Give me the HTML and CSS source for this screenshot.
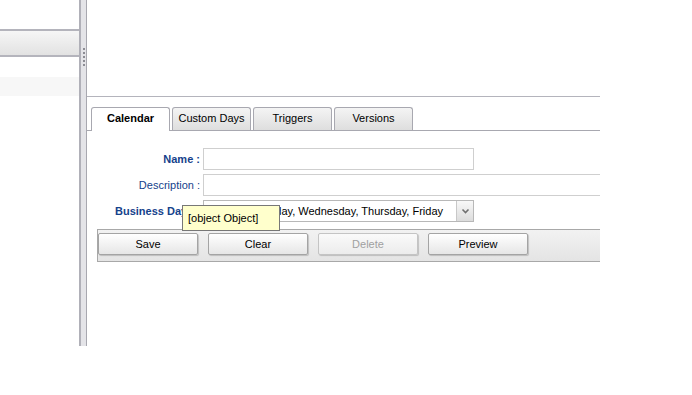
FILE: index.html
```html
<!DOCTYPE html>
<html lang="en">

<head>
    <meta charset="UTF-8">
    <title>Calendar</title>
    <link rel="stylesheet" href="styles.css">
</head>

<body>

    <div class="layout">
        <div class="west">
            <div class="west-top"></div>
            <div class="west-header"></div>
            <div class="west-gap"></div>
            <div class="west-row"></div>
        </div>

        <div class="splitter">
            <div class="grip"><span></span><span></span><span></span><span></span><span></span></div>
        </div>

        <div class="center">
            <div class="center-top"></div>

            <div class="tab-panel">
                <ul class="tabs">
                    <li class="tab active">Calendar</li>
                    <li class="tab">Custom Days</li>
                    <li class="tab">Triggers</li>
                    <li class="tab">Versions</li>
                </ul>

                <div class="tab-body">
                    <div class="form-row">
                        <label class="field-label strong">Name :</label>
                        <input class="field-input short" type="text">
                    </div>
                    <div class="form-row">
                        <label class="field-label">Description :</label>
                        <input class="field-input wide" type="text">
                    </div>
                    <div class="form-row">
                        <label class="field-label strong">Business Days :</label>
                        <div class="combo">
                            <span class="combo-text">Monday, Tuesday, Wednesday, Thursday, Friday</span>
                            <span class="combo-trigger">
                                <svg width="9" height="6" viewBox="0 0 9 6"><path d="M1.5 1.5 L4.5 4.5 L7.5 1.5" fill="none" stroke="#707070" stroke-width="1.6"/></svg>
                            </span>
                        </div>
                    </div>

                    <div class="toolbar">
                        <button class="btn">Save</button>
                        <button class="btn">Clear</button>
                        <button class="btn" disabled>Delete</button>
                        <button class="btn">Preview</button>
                    </div>

                    <div class="tooltip">[object Object]</div>
                </div>
            </div>
        </div>
    </div>

</body>

</html>
```

FILE: styles.css
```css
body {
    margin: 0;
    background-color: #ffffff;
    font-family: "Liberation Sans", Arial, sans-serif;
    font-size: 11px;
    color: #000000;
}

.layout {
    display: flex;
    height: 346px;
    width: 600px;
    overflow: hidden;
}

/* Left (west) region */
.west {
    width: 79px;
    flex-shrink: 0;
    background-color: #ffffff;
}

.west-top {
    height: 29px;
}

.west-header {
    height: 24px;
    border-top: 2px solid #b4b4bc;
    border-bottom: 2px solid #b4b4bc;
    background: linear-gradient(#f6f6f6, #e2e2e2);
}

.west-gap {
    height: 20px;
}

.west-row {
    height: 19px;
    background-color: #f7f7f7;
}

/* Splitter between regions */
.splitter {
    width: 5px;
    flex-shrink: 0;
    border-left: 2px solid #b0b0b8;
    border-right: 1px solid #a8a8b0;
    background-color: #e4e4e8;
    position: relative;
}

.grip {
    position: absolute;
    left: 2px;
    top: 48px;
    display: flex;
    flex-direction: column;
    gap: 2px;
}

.grip span {
    width: 2px;
    height: 2px;
    background-color: #8c8c94;
}

/* Center region */
.center {
    flex: 1;
    min-width: 0;
    position: relative;
    overflow: hidden;
}

.center-top {
    height: 96px;
    border-bottom: 1px solid #b4b4bc;
}

.tab-panel {
    padding-top: 10px;
}

.tabs {
    list-style: none;
    margin: 0;
    padding: 0 0 0 4px;
    display: flex;
    gap: 2px;
    height: 23px;
    border-bottom: 1px solid #a8a8b0;
}

.tab {
    width: 77px;
    height: 22px;
    border: 1px solid #a8a8b0;
    border-bottom: none;
    border-radius: 3px 3px 0 0;
    background: linear-gradient(#f4f4f4, #dedede);
    text-align: center;
    line-height: 21px;
    font-size: 11px;
}

.tab.active {
    height: 23px;
    margin-bottom: -1px;
    background: #ffffff;
    font-weight: bold;
}

.tab-body {
    position: relative;
    padding: 17px 0 0 10px;
}

/* Form rows */
.form-row {
    display: flex;
    align-items: center;
    height: 22px;
    margin-bottom: 4px;
}

.field-label {
    width: 103px;
    flex-shrink: 0;
    padding-right: 3px;
    text-align: right;
    color: #15428b;
    font-size: 11px;
    white-space: nowrap;
}

.field-label.strong {
    font-weight: bold;
}

.field-input {
    box-sizing: border-box;
    flex-shrink: 0;
    height: 22px;
    margin: 0;
    border: 1px solid #cfcfcf;
    background-color: #ffffff;
    font-family: inherit;
}

.field-input.short {
    width: 271px;
}

.field-input.wide {
    width: 440px;
}

.combo {
    box-sizing: border-box;
    flex-shrink: 0;
    width: 271px;
    height: 22px;
    border: 1px solid #b8b8b8;
    display: flex;
    align-items: center;
    overflow: hidden;
}

.combo-text {
    flex: 1;
    padding-left: 3px;
    white-space: nowrap;
    overflow: hidden;
}

.combo-trigger {
    width: 16px;
    height: 20px;
    flex-shrink: 0;
    border-left: 1px solid #c8c8c8;
    background: linear-gradient(#f8f8f8, #dcdcdc);
    display: flex;
    align-items: center;
    justify-content: center;
}

/* Button bar */
.toolbar {
    margin-top: 7px;
    box-sizing: border-box;
    height: 33px;
    border: 1px solid #a8a8a8;
    border-right: none;
    background: linear-gradient(#f2f2f2, #e4e4e4);
    display: flex;
    align-items: flex-start;
    gap: 10px;
    padding-top: 3px;
}

.btn {
    width: 100px;
    height: 22px;
    margin: 0;
    padding: 0;
    border: 1px solid #a4a4a4;
    border-radius: 2px;
    background: linear-gradient(#ffffff, #e6e6e6);
    box-shadow: 1px 1px 1px rgba(0, 0, 0, 0.18);
    font-family: inherit;
    font-size: 11px;
    color: #000000;
}

.btn:disabled {
    color: #a0a0a0;
    border-color: #c4c4c4;
    background: linear-gradient(#fafafa, #ececec);
}

/* Tooltip over the combo */
.tooltip {
    position: absolute;
    left: 95px;
    top: 74px;
    box-sizing: border-box;
    width: 98px;
    height: 26px;
    padding: 6px 0 0 5px;
    border: 1px solid #777777;
    background-color: #ffffcc;
    font-size: 11px;
}
```
